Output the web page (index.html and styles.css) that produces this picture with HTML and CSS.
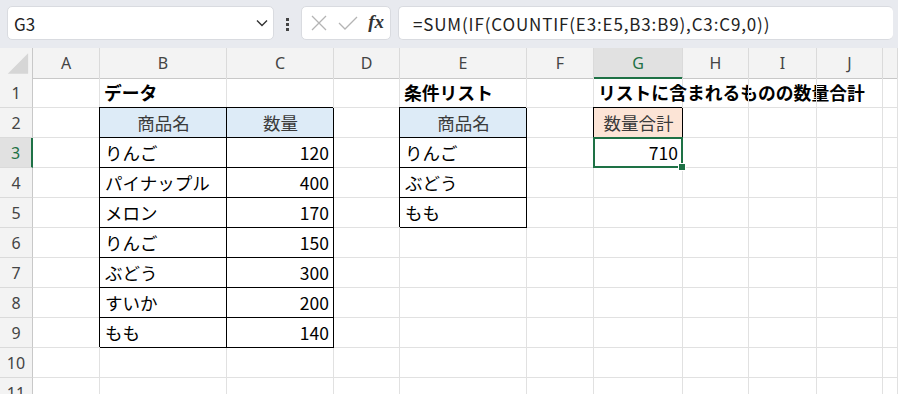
FILE: index.html
```html
<!DOCTYPE html>
<html lang="ja">
<head>
  <meta charset="UTF-8" />
  <title>Sheet</title>
  <link rel="stylesheet" href="styles.css">
</head>
<body>

  <!-- Formula bar -->
  <div class="topbar">
    <div class="namebox">
      <span>G3</span>
      <svg class="chev" width="12" height="8" viewBox="0 0 12 8"><path d="M1 1.5 L6 6.5 L11 1.5" fill="none" stroke="#333" stroke-width="1.4"/></svg>
    </div>
    <div class="dots"><i></i><i></i><i></i></div>
    <div class="fxbox">
      <svg width="18" height="18" viewBox="0 0 18 18"><path d="M2 2 L16 16 M16 2 L2 16" stroke="#b4b4b4" stroke-width="1.3"/></svg>
      <svg width="20" height="18" viewBox="0 0 20 18"><path d="M1 9 L7 15 L19 3" fill="none" stroke="#b4b4b4" stroke-width="1.3"/></svg>
      <span class="fx">fx</span>
    </div>
    <div class="formula">=SUM(IF(COUNTIF(E3:E5,B3:B9),C3:C9,0))</div>
  </div>

  <!-- Sheet -->
  <div class="sheet">
    <div class="row head">
      <div class="corner"><svg width="33" height="30" viewBox="0 0 33 30"><polygon points="29,5 29,26 8,26" fill="#d6d6d6"/></svg></div>
      <div class="ch">A</div><div class="ch">B</div><div class="ch">C</div><div class="ch">D</div>
      <div class="ch">E</div><div class="ch">F</div><div class="ch sel">G</div><div class="ch">H</div>
      <div class="ch">I</div><div class="ch">J</div><div class="ch"></div>
    </div>

    <div class="row">
      <div class="rh">1</div><div class="c"></div><div class="c b">データ</div><div class="c"></div><div class="c"></div>
      <div class="c b">条件リスト</div><div class="c"></div><div class="c b">リストに含まれるものの数量合計</div><div class="c"></div>
      <div class="c"></div><div class="c"></div><div class="c"></div>
    </div>

    <div class="row">
      <div class="rh">2</div><div class="c"></div><div class="c t th blue">商品名</div><div class="c t th blue">数量</div><div class="c"></div>
      <div class="c t th blue">商品名</div><div class="c"></div><div class="c t th peach">数量合計</div><div class="c"></div>
      <div class="c"></div><div class="c"></div><div class="c"></div>
    </div>

    <div class="row">
      <div class="rh sel">3</div><div class="c"></div><div class="c t">りんご</div><div class="c t num">120</div><div class="c"></div>
      <div class="c t">りんご</div><div class="c"></div><div class="c num active">710</div><div class="c"></div>
      <div class="c"></div><div class="c"></div><div class="c"></div>
    </div>

    <div class="row">
      <div class="rh">4</div><div class="c"></div><div class="c t">パイナップル</div><div class="c t num">400</div><div class="c"></div>
      <div class="c t">ぶどう</div><div class="c"></div><div class="c"></div><div class="c"></div>
      <div class="c"></div><div class="c"></div><div class="c"></div>
    </div>

    <div class="row">
      <div class="rh">5</div><div class="c"></div><div class="c t">メロン</div><div class="c t num">170</div><div class="c"></div>
      <div class="c t">もも</div><div class="c"></div><div class="c"></div><div class="c"></div>
      <div class="c"></div><div class="c"></div><div class="c"></div>
    </div>

    <div class="row">
      <div class="rh">6</div><div class="c"></div><div class="c t">りんご</div><div class="c t num">150</div><div class="c"></div>
      <div class="c"></div><div class="c"></div><div class="c"></div><div class="c"></div>
      <div class="c"></div><div class="c"></div><div class="c"></div>
    </div>

    <div class="row">
      <div class="rh">7</div><div class="c"></div><div class="c t">ぶどう</div><div class="c t num">300</div><div class="c"></div>
      <div class="c"></div><div class="c"></div><div class="c"></div><div class="c"></div>
      <div class="c"></div><div class="c"></div><div class="c"></div>
    </div>

    <div class="row">
      <div class="rh">8</div><div class="c"></div><div class="c t">すいか</div><div class="c t num">200</div><div class="c"></div>
      <div class="c"></div><div class="c"></div><div class="c"></div><div class="c"></div>
      <div class="c"></div><div class="c"></div><div class="c"></div>
    </div>

    <div class="row">
      <div class="rh">9</div><div class="c"></div><div class="c t">もも</div><div class="c t num">140</div><div class="c"></div>
      <div class="c"></div><div class="c"></div><div class="c"></div><div class="c"></div>
      <div class="c"></div><div class="c"></div><div class="c"></div>
    </div>

    <div class="row">
      <div class="rh">10</div><div class="c"></div><div class="c"></div><div class="c"></div><div class="c"></div>
      <div class="c"></div><div class="c"></div><div class="c"></div><div class="c"></div>
      <div class="c"></div><div class="c"></div><div class="c"></div>
    </div>

    <div class="row">
      <div class="rh">11</div><div class="c"></div><div class="c"></div><div class="c"></div><div class="c"></div>
      <div class="c"></div><div class="c"></div><div class="c"></div><div class="c"></div>
      <div class="c"></div><div class="c"></div><div class="c"></div>
    </div>
  </div>

</body>
</html>
```

FILE: styles.css
```css
* {
  box-sizing: border-box;
  margin: 0;
  padding: 0;
}

body, html {
  height: 100%;
  background: #fff;
  font-family: 'Noto Sans CJK JP', 'Noto Sans', sans-serif;
  color: #000;
  overflow: hidden;
}

/* formula bar */
.topbar {
  height: 48px;
  background: #e8eaef;
  display: flex;
  align-items: flex-start;
  padding: 6px 0 0 7px;
}

.namebox, .fxbox, .formula {
  height: 34px;
  background: #fff;
  border: 1px solid #d9dbe0;
  border-radius: 5px;
  display: flex;
  align-items: center;
}

.namebox {
  width: 267px;
  padding: 0 5px 0 6px;
  justify-content: space-between;
  font-size: 17px;
  color: #222;
}

.dots {
  width: 27px;
  display: flex;
  flex-direction: column;
  align-items: center;
  gap: 2px;
  padding-top: 12px;
}

.dots i {
  width: 3px;
  height: 3px;
  background: #444;
}

.fxbox {
  width: 90px;
  padding: 0 6px 0 8px;
  justify-content: space-between;
}

.fx {
  font-family: 'Liberation Serif', serif;
  font-style: italic;
  font-weight: bold;
  font-size: 19px;
  color: #333;
  padding-bottom: 2px;
}

.formula {
  margin-left: 7px;
  flex: 1;
  margin-right: 5px;
  padding-left: 14px;
  font-size: 17px;
  letter-spacing: 0.85px;
  color: #222;
  border-right: none;
}

/* sheet */
.row {
  display: grid;
  grid-template-columns: 33px 67px 127px 107px 66px 127px 67px 89px 66px 68px 66px 1fr;
  height: 30px;
}

.corner, .ch, .rh {
  background: #f3f3f3;
  color: #444;
  font-family: 'Noto Sans', sans-serif;
  font-size: 16px;
  display: flex;
  align-items: center;
  justify-content: center;
}

.corner {
  border-right: 1px solid #c8c8c8;
  border-bottom: 1px solid #c8c8c8;
}

.ch {
  border-right: 1px solid #dadada;
  border-bottom: 1px solid #c8c8c8;
}

.ch.sel {
  background: #e1e1e1;
  color: #1e7145;
  border-bottom: 2px solid #1e7145;
}

.rh {
  border-right: 1px solid #c8c8c8;
  border-bottom: 1px solid #dadada;
}

.rh.sel {
  background: #e1e1e1;
  color: #1e7145;
  border-right: 2px solid #1e7145;
}

.c {
  border-right: 1px solid #e1e1e1;
  border-bottom: 1px solid #e1e1e1;
  font-size: 17.5px;
  line-height: 29px;
  padding: 0 4px 0 5px;
  white-space: nowrap;
}

.c.b {
  font-weight: bold;
  font-size: 17.8px;
  padding-left: 4px;
}

.c.t {
  border-right-color: #000;
  border-bottom-color: #000;
  box-shadow: -1px -1px 0 #000;
}

.c.th {
  text-align: center;
  color: #3a3a3a;
}

.blue {
  background: #ddebf7;
}

.peach {
  background: #fce4d6;
}

.num {
  text-align: right;
}

.active {
  position: relative;
}

.active::before {
  content: '';
  position: absolute;
  top: -1px;
  left: -1px;
  right: -1px;
  bottom: -1px;
  border: 2px solid #1e7145;
}

.active::after {
  content: '';
  position: absolute;
  right: -4px;
  bottom: -4px;
  width: 6px;
  height: 6px;
  background: #1e7145;
  border: 1px solid #fff;
}
```
